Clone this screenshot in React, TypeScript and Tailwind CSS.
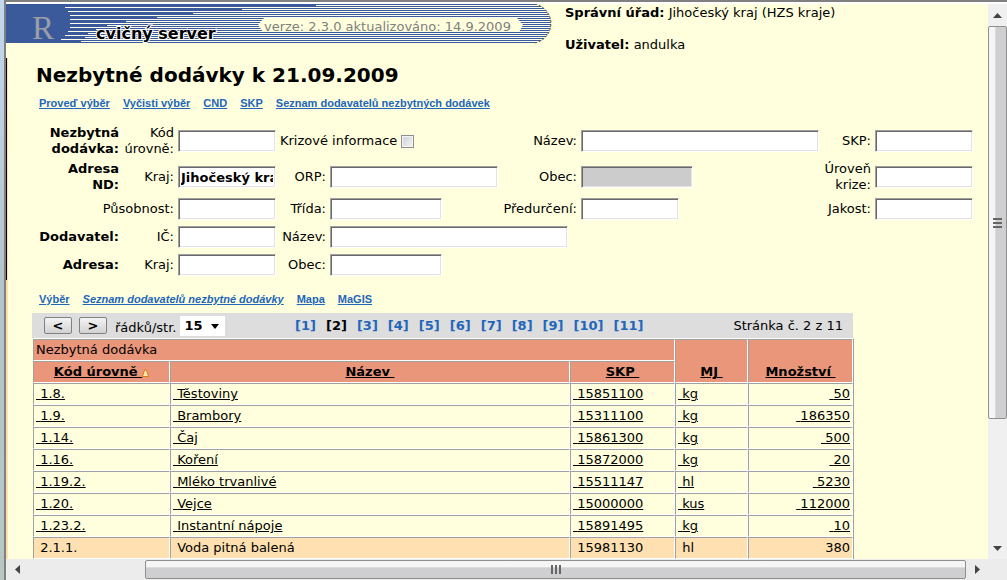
import type { InputHTMLAttributes, ReactNode } from "react";

interface Supply {
  code: string;
  name: string;
  skp: string;
  unit: string;
  amount: string;
  selected?: boolean;
}

const supplies: Supply[] = [
  { code: "1.8.", name: "Těstoviny", skp: "15851100", unit: "kg", amount: "50" },
  { code: "1.9.", name: "Brambory", skp: "15311100", unit: "kg", amount: "186350" },
  { code: "1.14.", name: "Čaj", skp: "15861300", unit: "kg", amount: "500" },
  { code: "1.16.", name: "Koření", skp: "15872000", unit: "kg", amount: "20" },
  { code: "1.19.2.", name: "Mléko trvanlivé", skp: "15511147", unit: "hl", amount: "5230" },
  { code: "1.20.", name: "Vejce", skp: "15000000", unit: "kus", amount: "112000" },
  { code: "1.23.2.", name: "Instantní nápoje", skp: "15891495", unit: "kg", amount: "10" },
  { code: "2.1.1.", name: "Voda pitná balená", skp: "15981130", unit: "hl", amount: "380", selected: true },
];

const pages = [1, 2, 3, 4, 5, 6, 7, 8, 9, 10, 11];

// [y, x where the light line starts]
const stripes = [
  [1, 310], [3, 59], [5, 236], [7, 62], [9, 187], [11, 64], [13, 151], [15, 64], [17, 120], [19, 64],
  [21, 101], [23, 64], [25, 90], [27, 62], [29, 82], [31, 59], [33, 79], [35, 55], [37, 75],
];

function Banner() {
  return (
    <svg className="block shrink-0 overflow-visible" width="545" height="39" viewBox="0 0 545 39">
      <defs>
        <clipPath id="banner">
          <path d="M0 0H529C538 2 545 10 545 19.500C545 29 538 37 529 39H0Z" />
        </clipPath>
      </defs>
      <g clipPath="url(#banner)" shapeRendering="crispEdges">
        <rect width="545" height="39" fill="#3a5a9c" />
        {stripes.map(([y, x]) => (
          <rect key={y} x={x} y={y} width={545 - x} height="1" fill="#ffffee" />
        ))}
      </g>
      <path d="M529 0C538 2 545 10 545 19.500C545 29 538 37 529 39" fill="none" stroke="#6b5a1c" strokeDasharray="2 2" />
      <path d="M258 14H511L517 21L513 28H257L252 21Z" fill="#ffffdd" />
      <text x="26" y="35" fontFamily="Liberation Serif" fontSize="33" fill="#9a9ea8">R</text>
      <text
        x="90" y="35" fontFamily="DejaVu Sans" fontWeight="bold" fontSize="16"
        fill="#000" stroke="#fff" strokeWidth="2" paintOrder="stroke"
      >
        cvičný server
      </text>
      <text x="258" y="27" fontFamily="DejaVu Sans" fontSize="13" fill="#808080">
        verze: 2.3.0 aktualizováno: 14.9.2009
      </text>
    </svg>
  );
}

function Field({ className = "", ...props }: InputHTMLAttributes<HTMLInputElement>) {
  return (
    <input
      type="text"
      className={`h-[22px] border border-t-[#a0a0a0] border-l-[#a0a0a0] border-r-white border-b-white bg-white px-0.5 font-bold shadow-[inset_1px_1px_0_#696969,inset_-1px_-1px_0_#e3e3e3] outline-none disabled:bg-[#cccccc] ${className}`}
      {...props}
    />
  );
}

function Label({ id, className = "", children }: { id: string; className?: string; children: ReactNode }) {
  return (
    <label htmlFor={id} className={`text-right ${className}`}>
      {children}
    </label>
  );
}

function FilterForm() {
  return (
    <form className="mt-3.5 grid auto-rows-[minmax(24px,auto)] grid-cols-[83px_51px_98px_46px_168px_75px_minmax(238px,1fr)_48px_98px] items-center gap-1 pr-[15px] pl-7">
      <b className="text-right">Nezbytná dodávka:</b>
      <Label id="kod">Kód úrovně:</Label>
      <Field id="kod" />
      <div className="col-span-2 flex items-center gap-1">
        <label htmlFor="krize">Krizové informace</label>
        <input
          id="krize"
          type="checkbox"
          className="size-[13px] appearance-none border border-[#8e8f8f] bg-linear-to-br from-[#cbcfd5] to-[#f6f6f6] shadow-[inset_0_0_0_1px_#f4f4f4]"
        />
      </div>
      <Label id="nazev">Název:</Label>
      <Field id="nazev" />
      <Label id="skp">SKP:</Label>
      <Field id="skp" />

      <b className="text-right">Adresa<br />ND:</b>
      <Label id="kraj">Kraj:</Label>
      <Field id="kraj" defaultValue="Jihočeský kraj" />
      <Label id="orp">ORP:</Label>
      <Field id="orp" />
      <Label id="obec">Obec:</Label>
      <Field id="obec" disabled className="w-28" />
      <Label id="uroven">Úroveň krize:</Label>
      <Field id="uroven" />

      <Label id="pusobnost" className="col-span-2">Působnost:</Label>
      <Field id="pusobnost" />
      <Label id="trida">Třída:</Label>
      <Field id="trida" className="w-28" />
      <Label id="predurceni">Předurčení:</Label>
      <Field id="predurceni" className="w-[98px]" />
      <Label id="jakost">Jakost:</Label>
      <Field id="jakost" />

      <b className="text-right">Dodavatel:</b>
      <Label id="ic">IČ:</Label>
      <Field id="ic" />
      <Label id="dodavatel">Název:</Label>
      <Field id="dodavatel" className="col-span-2 w-[238px]" />

      <b className="col-start-1 text-right">Adresa:</b>
      <Label id="adresa-kraj">Kraj:</Label>
      <Field id="adresa-kraj" />
      <Label id="adresa-obec">Obec:</Label>
      <Field id="adresa-obec" className="w-28" />
    </form>
  );
}

function Links({ items, italic, className }: { items: string[]; italic?: string; className: string }) {
  return (
    <nav className={`flex gap-[13px] pl-[31px] font-['Liberation_Sans',sans-serif] text-[11px] leading-4 font-bold text-[#2166bb] ${className}`}>
      {items.map((item) => (
        <a key={item} href="#" className={item === italic ? "italic underline" : "underline"}>
          {item}
        </a>
      ))}
    </nav>
  );
}

const pagerButton =
  "h-[17px] w-7 rounded-xs border border-[#808080] bg-linear-to-b from-[#f4f4f4] to-[#d2d2d2] leading-4 font-bold";

function Pager() {
  return (
    <div className="flex h-[25px] items-center bg-[#dddddd] pr-2.5">
      <div className="flex w-[263px] items-center pl-3">
        <button type="button" className={pagerButton}>&lt;</button>
        <button type="button" className={`ml-[7px] ${pagerButton}`}>&gt;</button>
        <label htmlFor="rows" className="ml-2 pt-1">řádků/str.</label>
        <div className="relative ml-1">
          <select id="rows" className="block h-5 w-[45px] appearance-none bg-white pl-1 font-bold">
            <option>15</option>
          </select>
          <svg className="pointer-events-none absolute top-2 right-1.5" width="8" height="5" viewBox="0 0 8 5">
            <path d="M0 0H8L4 5Z" />
          </svg>
        </div>
      </div>
      <nav className="flex gap-2.5 font-bold text-[#2166bb]">
        {pages.map((page) =>
          page === 2 ? <span key={page} className="text-black">[2]</span> : <a key={page} href="#">[{page}]</a>
        )}
      </nav>
      <span className="ml-auto">Stránka č. 2 z 11</span>
    </div>
  );
}

const cell = "h-[22px] border border-t-[#a0a0a0] border-l-[#a0a0a0] border-r-white border-b-white py-0 leading-5";
const head = `${cell} bg-[#e9967a] px-0.5 align-bottom`;

function SupplyTable() {
  return (
    <table className="ml-px w-full table-fixed border-separate border-spacing-0 border-t border-r border-t-white border-r-[#a0a0a0]">
      <colgroup>
        <col className="w-[137px]" />
        <col />
        <col className="w-[105px]" />
        <col className="w-[73px]" />
        <col className="w-[105px]" />
      </colgroup>
      <thead>
        <tr>
          <th colSpan={3} className={`${head} text-left font-normal`}>Nezbytná dodávka</th>
          <th rowSpan={2} className={head}><a href="#" className="underline">MJ&nbsp;</a></th>
          <th rowSpan={2} className={head}><a href="#" className="underline">Množství&nbsp;</a></th>
        </tr>
        <tr>
          <th className={head}>
            <a href="#" className="underline">Kód úrovně&nbsp;</a>
            <svg className="inline-block" width="7" height="8" viewBox="0 0 7 8">
              <path d="M.5 7.500H6.500L4.500 1H2.500Z" fill="#ffe9b0" stroke="#d97a10" />
            </svg>
          </th>
          <th className={head}><a href="#" className="underline">Název&nbsp;</a></th>
          <th className={head}><a href="#" className="underline">SKP&nbsp;</a></th>
        </tr>
      </thead>
      <tbody>
        {supplies.map((row) => (
          <tr key={row.code} className={row.selected ? "bg-[#ffe0b0]" : ""}>
            {[row.code, row.name, row.skp, row.unit, row.amount].map((value, i) => (
              <td key={i} className={`${cell} ${i === 4 ? "pr-0.5 text-right" : "pl-0.5"}`}>
                {row.selected ? <>&nbsp;{value}</> : <a href="#" className="underline">&nbsp;{value}</a>}
              </td>
            ))}
          </tr>
        ))}
      </tbody>
    </table>
  );
}

function VerticalScrollbar() {
  return (
    <div className="flex w-[19px] shrink-0 flex-col bg-[#f0f0f0]">
      <button type="button" aria-label="Nahoru" className="flex h-[22px] shrink-0 items-center justify-center">
        <svg width="9" height="5" viewBox="0 0 9 5"><path d="M0 5H9L4.500 0Z" fill="#444" /></svg>
      </button>
      <div className="flex grow flex-col">
        <div className="flex basis-[77%] flex-col items-center justify-center gap-0.5 rounded-xs border border-[#8f8f8f] bg-linear-to-r from-[#f5f5f5] from-35% to-[#cfcfd2] to-40%">
          <i className="h-0.5 w-[9px] bg-[#666]" />
          <i className="h-0.5 w-[9px] bg-[#666]" />
          <i className="h-0.5 w-[9px] bg-[#666]" />
        </div>
      </div>
      <button type="button" aria-label="Dolů" className="flex h-[22px] shrink-0 items-center justify-center">
        <svg width="9" height="5" viewBox="0 0 9 5"><path d="M0 0H9L4.500 5Z" fill="#444" /></svg>
      </button>
    </div>
  );
}

function HorizontalScrollbar() {
  return (
    <div className="flex h-[21px] shrink-0 bg-[#ececec] pr-[19px]">
      <button type="button" aria-label="Doleva" className="flex w-[22px] shrink-0 items-center justify-center">
        <svg width="5" height="9" viewBox="0 0 5 9"><path d="M5 0V9L0 4.500Z" fill="#444" /></svg>
      </button>
      <div className="flex grow justify-end py-px">
        <div className="flex basis-7/8 items-center justify-center gap-0.5 rounded-xs border border-[#8f8f8f] bg-linear-to-b from-[#f5f5f5] from-35% to-[#cfcfd2] to-40%">
          <i className="h-[9px] w-0.5 bg-[#666]" />
          <i className="h-[9px] w-0.5 bg-[#666]" />
          <i className="h-[9px] w-0.5 bg-[#666]" />
        </div>
      </div>
      <button type="button" aria-label="Doprava" className="flex w-[22px] shrink-0 items-center justify-center">
        <svg width="5" height="9" viewBox="0 0 5 9"><path d="M0 0V9L5 4.500Z" fill="#444" /></svg>
      </button>
    </div>
  );
}

export default function App() {
  return (
    <div className="flex h-screen overflow-hidden bg-white font-['DejaVu_Sans',sans-serif] text-[13px] leading-4 text-black">
      <div className="w-1 shrink-0 bg-linear-to-b from-[#c4d8ee] via-[#b4c4cc] to-[#b8c6c4]" />
      <div className="flex min-w-0 grow flex-col border-t-2 border-l-2 border-[#808080]">
        <div className="flex min-h-0 grow pt-0.5">
          <main className="flex min-w-0 grow flex-col overflow-hidden bg-[#ffffdd]">
            <header className="flex h-[54px] shrink-0 gap-3.5">
              <Banner />
              <div className="flex flex-col gap-4 pt-px">
                <p><b>Správní úřad:</b> Jihočeský kraj (HZS kraje)</p>
                <p><b>Uživatel:</b> andulka</p>
              </div>
            </header>
            <div className="flex min-h-0 grow">
              <div className="flex w-0.5 shrink-0 flex-col bg-[#ffdfae]">
                <div className="h-[222px] w-px bg-black" />
              </div>
              <div className="min-w-0 grow">
                <h1 className="mt-[3px] pl-7 text-xl leading-7 font-bold">Nezbytné dodávky k 21.09.2009</h1>
                <Links
                  className="mt-1.5"
                  items={["Proveď výběr", "Vyčisti výběr", "CND", "SKP", "Seznam dodavatelů nezbytných dodávek"]}
                />
                <FilterForm />
                <Links
                  className="mt-3.5"
                  italic="Seznam dodavatelů nezbytné dodávky"
                  items={["Výběr", "Seznam dodavatelů nezbytné dodávky", "Mapa", "MaGIS"]}
                />
                <section className="mt-1.5 mr-[135px] ml-6">
                  <Pager />
                  <SupplyTable />
                </section>
              </div>
            </div>
          </main>
          <VerticalScrollbar />
        </div>
        <HorizontalScrollbar />
      </div>
    </div>
  );
}
